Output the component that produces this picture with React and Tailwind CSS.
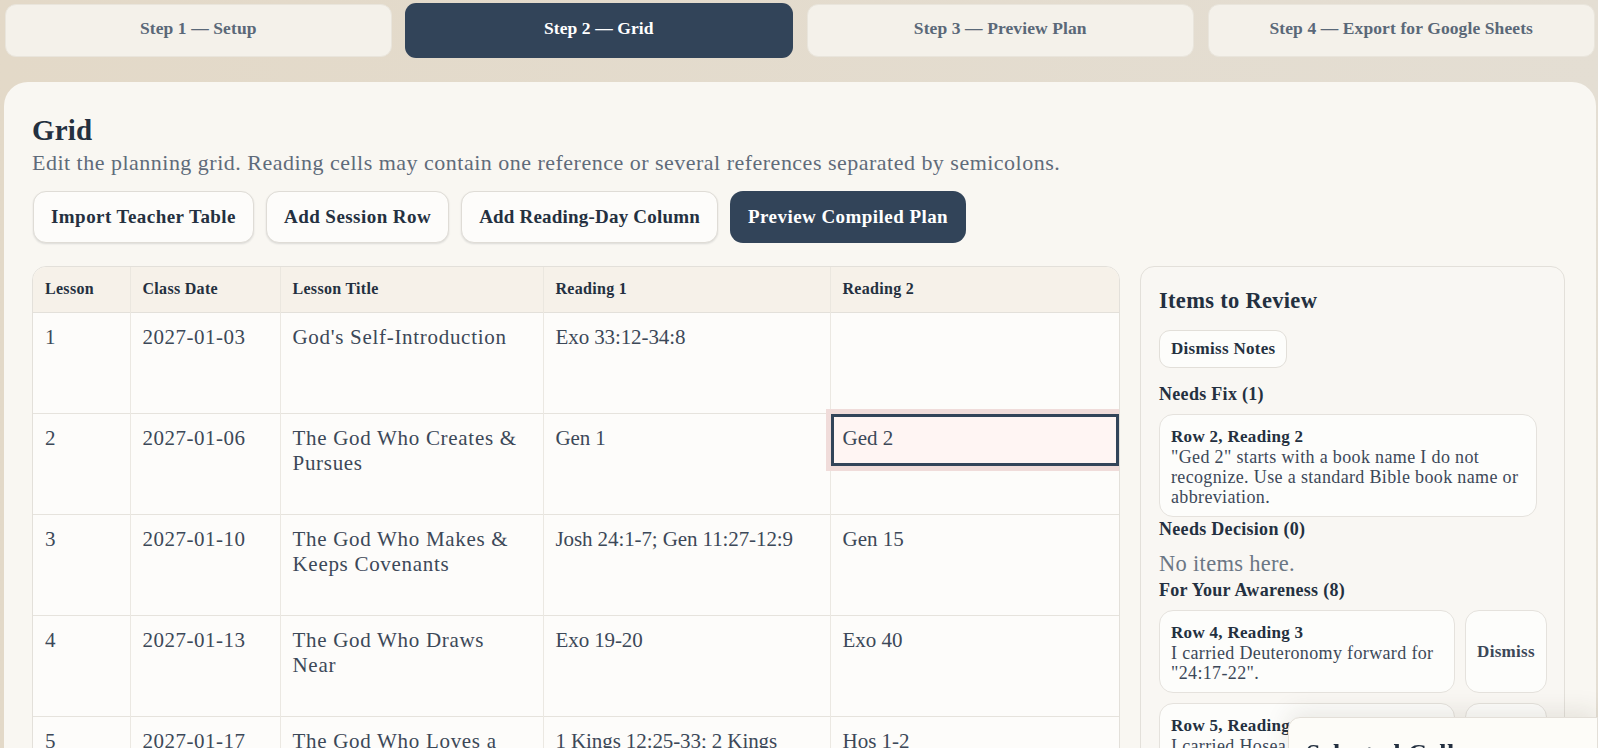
const steps = [
  { label: "Step 1 — Setup" },
  { label: "Step 2 — Grid", active: true },
  { label: "Step 3 — Preview Plan" },
  { label: "Step 4 — Export for Google Sheets" },
];

const rows = [
  { n: "1", date: "2027-01-03", title: "God's Self-Introduction", r1: "Exo 33:12-34:8", r2: "" },
  { n: "2", date: "2027-01-06", title: "The God Who Creates & Pursues", r1: "Gen 1", r2: "Ged 2", bad: true },
  { n: "3", date: "2027-01-10", title: "The God Who Makes & Keeps Covenants", r1: "Josh 24:1-7; Gen 11:27-12:9", r2: "Gen 15" },
  { n: "4", date: "2027-01-13", title: "The God Who Draws Near", r1: "Exo 19-20", r2: "Exo 40" },
  { n: "5", date: "2027-01-17", title: "The God Who Loves a Wayward People", r1: "1 Kings 12:25-33; 2 Kings 17:1-23", r2: "Hos 1-2" },
];

function ToolButton({ children, primary, tight }) {
  const track = tight ? "tracking-[0.2px]" : "tracking-[0.45px]";
  return (
    <button
      className={
        (primary
          ? "h-[52px] px-[18px] rounded-[13px] bg-[#324459] text-white text-[19px] font-bold whitespace-nowrap "
          : "h-[52px] px-[17px] rounded-[13px] bg-[#fdfcfa] border border-[#dfdcd6] shadow-[0_1px_2px_rgba(40,50,60,0.14)] text-[#243040] text-[19px] font-bold whitespace-nowrap ") + track
      }
    >
      {children}
    </button>
  );
}

function ReviewCard({ title, children }) {
  return (
    <div className="bg-[#fdfdfb] border border-[#e5e2dd] rounded-[14px] px-[11px] pt-3 pb-[9px] text-[18px] leading-5 tracking-[0.35px] text-[#3c4858]">
      <div className="font-bold text-[17px] tracking-[0.3px] text-[#243040]">{title}</div>
      {children}
    </div>
  );
}

function SectionHead({ children, className = "" }) {
  return <h3 className={"text-[18px] leading-6 font-bold tracking-[0.3px] text-[#243040] " + className}>{children}</h3>;
}

export default function App() {
  return (
    <div className="h-screen overflow-hidden bg-gradient-to-r from-[#e3d9c8] to-[#e4ded3] font-['Liberation_Serif',serif] text-[#243040]">
      {/* steps */}
      <div className="grid grid-cols-4 gap-[13.5px] pl-[4.5px] pr-[3px] pt-1">
        {steps.map((s) => (
          <button
            key={s.label}
            className={
              s.active
                ? "h-[55px] -mt-px -ml-px rounded-[11px] bg-[#324459] text-white text-[17.5px] font-bold tracking-[0.1px] pb-1"
                : "h-[53px] rounded-[11px] bg-[#f4f1ea] border border-[#e9e5dc] text-[#5a6878] text-[17.5px] font-bold tracking-[0.1px] pb-1"
            }
          >
            {s.label}
          </button>
        ))}
      </div>

      {/* main card */}
      <div className="mt-6 ml-1 mr-0.5 rounded-t-[24px] bg-[#f9f7f2] px-7 pt-[29px]">
        <h1 className="text-[29px] leading-[38px] font-bold tracking-[0.2px]">Grid</h1>
        <p className="text-[22px] leading-[28px] tracking-[0.49px] text-[#5f6b7a]">
          Edit the planning grid. Reading cells may contain one reference or several references separated by semicolons.
        </p>

        <div className="flex gap-3 mt-[14px] ml-px">
          <ToolButton>Import Teacher Table</ToolButton>
          <ToolButton>Add Session Row</ToolButton>
          <ToolButton tight>Add Reading-Day Column</ToolButton>
          <ToolButton primary>Preview Compiled Plan</ToolButton>
        </div>

        <div className="flex gap-5 mt-[23px] items-start">
          {/* planning table */}
          <div className="w-[1088px] shrink-0 rounded-t-[14px] overflow-hidden border border-[#e3e0da] bg-[#fdfcfa]">
            <table className="w-full table-fixed border-collapse">
              <colgroup>
                <col className="w-[97px]" />
                <col className="w-[150px]" />
                <col className="w-[263px]" />
                <col className="w-[287px]" />
                <col />
              </colgroup>
              <thead>
                <tr className="h-[45px] text-left text-[16px] font-bold bg-[#f6f1e9] border-b border-[#e3e0da]">
                  {["Lesson", "Class Date", "Lesson Title", "Reading 1", "Reading 2"].map((h, i) => (
                    <th key={h} className={"px-3 font-bold tracking-[0.3px] " + (i > 0 ? "border-l border-[#ebe7df]" : "")}>
                      {h}
                    </th>
                  ))}
                </tr>
              </thead>
              <tbody>
                {rows.map((r) => (
                  <tr key={r.n} className="h-[101px] border-b border-[#e6e3dd] text-[21px] leading-[25px] text-[#3c4858] align-top">
                    <td className="px-3 pt-3">{r.n}</td>
                    <td className="px-3 pt-3 border-l border-[#ebe8e2] tracking-[0.5px]">{r.date}</td>
                    <td className="pl-3 pr-5 pt-3 border-l border-[#ebe8e2] tracking-[0.7px]">{r.title}</td>
                    <td className="px-3 pt-3 border-l border-[#ebe8e2] tracking-[-0.1px]">{r.r1}</td>
                    {r.bad ? (
                      <td className="p-0 border-l border-[#ebe8e2]">
                        <div className="relative z-10 h-[52px] pl-[9px] pt-[9px] bg-[#fff5f3] border-[3px] border-[#324459] shadow-[0_0_0_5px_#f0dcda]">
                          {r.r2}
                        </div>
                      </td>
                    ) : (
                      <td className="px-3 pt-3 border-l border-[#ebe8e2]">{r.r2}</td>
                    )}
                  </tr>
                ))}
              </tbody>
            </table>
          </div>

          {/* review panel */}
          <aside className="w-[425px] h-[600px] shrink-0 rounded-t-[14px] border border-[#e3e0da] px-[18px] pt-[20px] bg-[#f9f7f3]">
            <h2 className="text-[22.5px] leading-[28px] font-bold tracking-[0.3px]">Items to Review</h2>
            <button className="mt-[15px] h-[38px] px-[11px] rounded-[11px] bg-[#fdfdfb] border border-[#e2dfd9] text-[17px] font-bold tracking-[0.3px]">
              Dismiss Notes
            </button>
            <SectionHead className="mt-[14px] mb-2">Needs Fix (1)</SectionHead>
            <div className="w-[378px]">
              <ReviewCard title="Row 2, Reading 2">
                "Ged 2" starts with a book name I do not recognize. Use a standard Bible book name or abbreviation.
              </ReviewCard>
            </div>
            <SectionHead>Needs Decision (0)</SectionHead>
            <p className="mt-[10px] text-[22.5px] leading-[26px] tracking-[0.3px] text-[#6b7684]">No items here.</p>
            <SectionHead className="mt-px mb-2">For Your Awareness (8)</SectionHead>
            <div className="grid grid-cols-[296px_82px] gap-x-[10px] gap-y-[10px]">
              <ReviewCard title="Row 4, Reading 3">
                I carried Deuteronomy forward for "24:17-22".
              </ReviewCard>
              <button className="rounded-[14px] bg-[#fdfdfb] border border-[#e5e2dd] text-[17px] font-bold tracking-[0.3px] text-[#3c4858]">Dismiss</button>
              <ReviewCard title="Row 5, Reading 2">
                I carried Hosea forward for "1-2".
              </ReviewCard>
              <button className="rounded-[14px] bg-[#fdfdfb] border border-[#e5e2dd] text-[17px] font-bold tracking-[0.3px] text-[#3c4858]">Dismiss</button>
            </div>
          </aside>
        </div>
      </div>

      {/* selected cell drawer */}
      <div className="fixed left-[1288px] right-0 top-[717px] h-[200px] rounded-tl-[12px] border border-[#e3dfd8] bg-[#fdfcf8] shadow-[0_-6px_24px_rgba(60,50,30,0.1)] px-[17px] pt-[21px]">
        <h2 className="text-[26px] leading-[30px] font-bold tracking-[0.5px]">Selected Cell</h2>
      </div>
    </div>
  );
}
